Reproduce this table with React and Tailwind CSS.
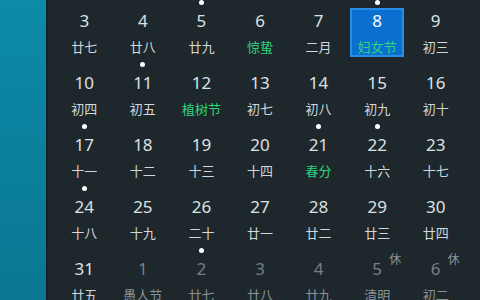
const weeks = [
  [
    { d: "3", l: "廿七" },
    { d: "4", l: "廿八" },
    { d: "5", l: "廿九", dot: true },
    { d: "6", l: "惊蛰", fest: true },
    { d: "7", l: "二月" },
    { d: "8", l: "妇女节", fest: true, dot: true, today: true },
    { d: "9", l: "初三" },
  ],
  [
    { d: "10", l: "初四" },
    { d: "11", l: "初五", dot: true },
    { d: "12", l: "植树节", fest: true },
    { d: "13", l: "初七" },
    { d: "14", l: "初八" },
    { d: "15", l: "初九" },
    { d: "16", l: "初十" },
  ],
  [
    { d: "17", l: "十一", dot: true },
    { d: "18", l: "十二" },
    { d: "19", l: "十三" },
    { d: "20", l: "十四" },
    { d: "21", l: "春分", fest: true, dot: true },
    { d: "22", l: "十六", dot: true },
    { d: "23", l: "十七" },
  ],
  [
    { d: "24", l: "十八", dot: true },
    { d: "25", l: "十九" },
    { d: "26", l: "二十" },
    { d: "27", l: "廿一" },
    { d: "28", l: "廿二" },
    { d: "29", l: "廿三" },
    { d: "30", l: "廿四" },
  ],
  [
    { d: "31", l: "廿五" },
    { d: "1", l: "愚人节", next: true },
    { d: "2", l: "廿七", next: true, dot: true },
    { d: "3", l: "廿八", next: true },
    { d: "4", l: "廿九", next: true },
    { d: "5", l: "清明", next: true, rest: true },
    { d: "6", l: "初二", next: true, rest: true },
  ],
];

function DayCell({ day }) {
  const numColor = day.today ? "text-white" : day.next ? "text-[#767f84]" : "text-[#dde1e3]";
  const lunarColor = day.fest
    ? "text-[#2fd47c]"
    : day.next
    ? "text-[#8a9296]"
    : "text-[#d2d7da]";

  return (
    <div className="relative h-[62px] flex flex-col items-center">
      {day.today && (
        <div className="absolute top-[13px] left-1/2 -translate-x-1/2 w-[54px] h-[49px] bg-[#0b6fd0] border-2 border-[#2b8ce6]" />
      )}
      <div className="h-[14px] flex items-center justify-center">
        {day.dot && <div className="w-[5px] h-[5px] rounded-full bg-white" />}
      </div>
      <div className={`relative h-[24px] leading-[24px] text-[17px] ${numColor}`}>
        {day.d}
        {day.rest && (
          <span className="absolute left-[17px] top-[-6px] text-[12px] leading-[16px] text-[#8d9599] font-['Noto_Sans_CJK_SC',sans-serif]">
            休
          </span>
        )}
      </div>
      <div
        className={`relative mt-[6px] h-[16px] leading-[16px] text-[13px] font-['Noto_Sans_CJK_SC',sans-serif] ${lunarColor}`}
      >
        {day.l}
      </div>
    </div>
  );
}

export default function App() {
  return (
    <div className="w-[480px] h-[300px] overflow-hidden flex font-['Noto_Sans','Noto_Sans_CJK_SC',sans-serif]">
      {/* desktop strip */}
      <div className="w-[46px] h-full bg-gradient-to-b from-[#0c8aa8] to-[#0a7792]" />

      {/* calendar panel */}
      <div className="flex-1 h-full bg-[#1e282c] border-l-2 border-[#172024] pl-[7px]">
        <div className="w-[410px] -mt-[5px] grid grid-cols-7">
          {weeks.flat().map((day, i) => (
            <DayCell key={i} day={day} />
          ))}
        </div>
      </div>
    </div>
  );
}
